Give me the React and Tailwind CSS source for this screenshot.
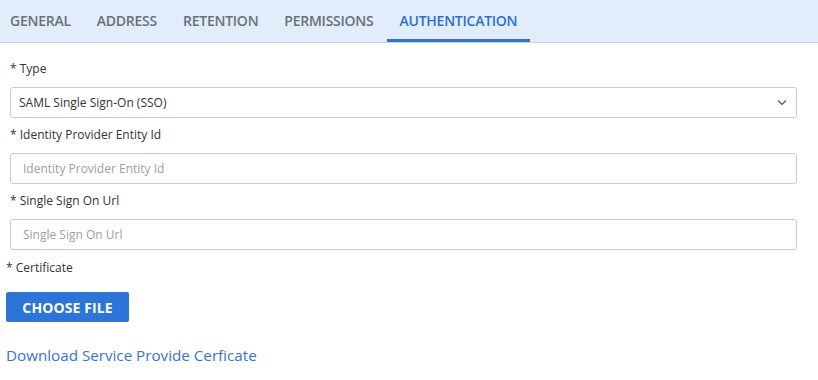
import React from "react";

const tabs = ["GENERAL", "ADDRESS", "RETENTION", "PERMISSIONS", "AUTHENTICATION"];

function Label({ children, className = "" }) {
  return (
    <div className={"text-[12px] leading-[18px] text-[#333333] " + className}>{children}</div>
  );
}

export default function App() {
  return (
    <div className="w-[818px] h-[380px] bg-white overflow-hidden" style={{ fontFamily: '"Open Sans", "Noto Sans", sans-serif' }}>
      <div className="flex h-[43px] bg-[#e1edfb] border-b border-[#cdd1d6]">
        {tabs.map((t, i) => {
          const active = t === "AUTHENTICATION";
          return (
            <div
              key={t}
              className={
                "flex items-center h-full text-[14px] font-semibold tracking-[-0.25px] border-b-[3px] -mb-px " +
                (i === 0 ? "pl-[10px] pr-[13px] " : "px-[13px] ") +
                (active ? "text-[#2c6fd5] border-[#2d74d8]" : "text-[#6c7078] border-transparent")
              }
            >
              <span className="pt-[2px]">{t}</span>
            </div>
          );
        })}
      </div>

      <div className="pt-[17px]">
        <div className="px-[10px] pr-[21px] flex flex-col">
          <Label>* Type</Label>
          <div className="mt-[9px] h-[31px] border border-[#c8ccd1] rounded-[3px] flex items-center justify-between pl-[8px] pr-[8px]">
            <span className="text-[12px] text-[#333333]">SAML Single Sign-On (SSO)</span>
            <svg width="10" height="7" viewBox="0 0 10 7" className="mr-[1px]">
              <polyline points="1,1.5 5,5.5 9,1.5" fill="none" stroke="#4a5060" strokeWidth="1.2" />
            </svg>
          </div>

          <Label className="mt-[8px]">* Identity Provider Entity Id</Label>
          <div className="mt-[9px] h-[31px] border border-[#c8ccd1] rounded-[3px] flex items-center pl-[12px]">
            <span className="text-[12px] text-[#9aa0a6]">Identity Provider Entity Id</span>
          </div>

          <Label className="mt-[8px]">* Single Sign On Url</Label>
          <div className="mt-[9px] h-[31px] border border-[#c8ccd1] rounded-[3px] flex items-center pl-[12px]">
            <span className="text-[12px] text-[#9aa0a6]">Single Sign On Url</span>
          </div>
        </div>

        <div className="px-[6px] flex flex-col items-start">
          <Label className="mt-[9px]">* Certificate</Label>
          <button className="mt-[15px] w-[123px] h-[30px] bg-[#2d74d9] rounded-[2px] text-white text-[14px] font-bold tracking-[0.1px] flex items-center justify-center">
            CHOOSE FILE
          </button>
          <a className="mt-[21px] text-[15.2px] leading-[24px] text-[#3474d6] cursor-pointer">
            Download Service Provide Cerficate
          </a>
        </div>
      </div>
    </div>
  );
}
